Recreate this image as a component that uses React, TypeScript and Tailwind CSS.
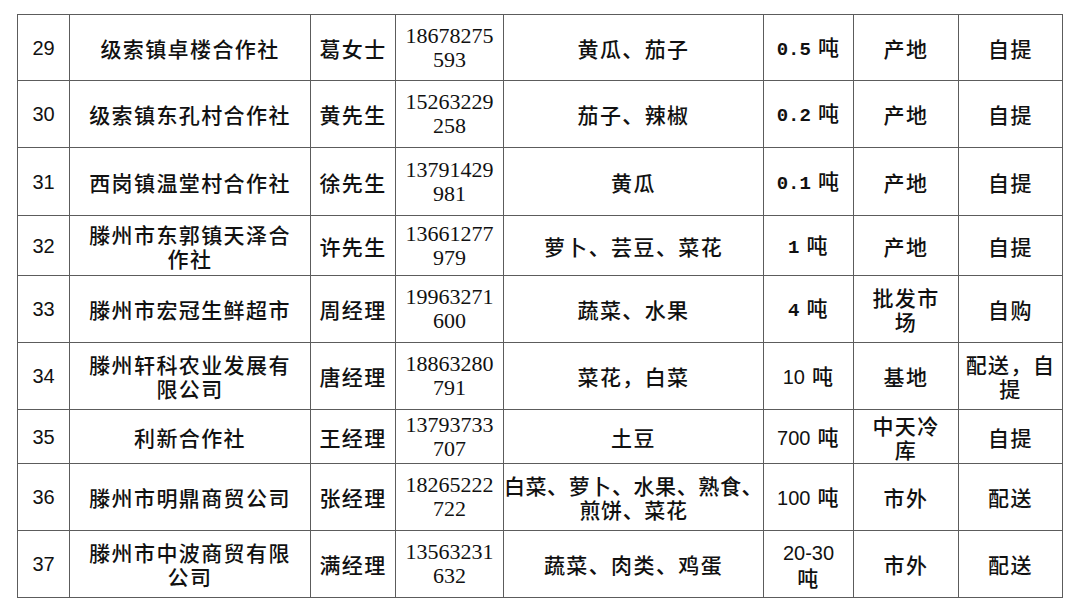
import React from "react";

type Row = {
  no: string;
  name: React.ReactNode;
  contact: string;
  phone: [string, string];
  goods: React.ReactNode;
  qty: React.ReactNode;
  place: React.ReactNode;
  mode: React.ReactNode;
  h: string;
};

const cjk = "font-['Noto_Sans_CJK_SC',sans-serif] text-[21px] tracking-[1.4px] font-medium leading-[24px]";
const mono = "font-['Liberation_Mono','Noto_Sans_CJK_SC',monospace]";
const sans = "font-['Liberation_Sans','Noto_Sans_CJK_SC',sans-serif]";

const Q = ({ n, kind }: { n: string; kind: "mono" | "sans" }) => (
  <span className="whitespace-nowrap">
    <span className={`${kind === "mono" ? mono + " text-[19px] font-bold" : sans + " text-[20px] font-medium"} tracking-normal`}>{n}</span>
    <span className="ml-[7px]">吨</span>
  </span>
);

const rows: Row[] = [
  { no: "29", name: "级索镇卓楼合作社", contact: "葛女士", phone: ["18678275", "593"], goods: "黄瓜、茄子", qty: <Q n="0.5" kind="mono" />, place: "产地", mode: "自提", h: "h-[65px]" },
  { no: "30", name: "级索镇东孔村合作社", contact: "黄先生", phone: ["15263229", "258"], goods: "茄子、辣椒", qty: <Q n="0.2" kind="mono" />, place: "产地", mode: "自提", h: "h-[66px]" },
  { no: "31", name: "西岗镇温堂村合作社", contact: "徐先生", phone: ["13791429", "981"], goods: "黄瓜", qty: <Q n="0.1" kind="mono" />, place: "产地", mode: "自提", h: "h-[67px]" },
  { no: "32", name: <>滕州市东郭镇天泽合<br />作社</>, contact: "许先生", phone: ["13661277", "979"], goods: "萝卜、芸豆、菜花", qty: <Q n="1" kind="mono" />, place: "产地", mode: "自提", h: "h-[59px]" },
  { no: "33", name: "滕州市宏冠生鲜超市", contact: "周经理", phone: ["19963271", "600"], goods: "蔬菜、水果", qty: <Q n="4" kind="mono" />, place: <>批发市<br />场</>, mode: "自购", h: "h-[66px]" },
  { no: "34", name: <>滕州轩科农业发展有<br />限公司</>, contact: "唐经理", phone: ["18863280", "791"], goods: "菜花，白菜", qty: <Q n="10" kind="sans" />, place: "基地", mode: <>配送，自<br />提</>, h: "h-[66px]" },
  { no: "35", name: "利新合作社", contact: "王经理", phone: ["13793733", "707"], goods: "土豆", qty: <Q n="700" kind="sans" />, place: <>中天冷<br />库</>, mode: "自提", h: "h-[53px]" },
  { no: "36", name: "滕州市明鼎商贸公司", contact: "张经理", phone: ["18265222", "722"], goods: <span className="whitespace-nowrap tracking-[0.6px]">白菜、萝卜、水果、熟食、<br />煎饼、菜花</span>, qty: <Q n="100" kind="sans" />, place: "市外", mode: "配送", h: "h-[66px]" },
  { no: "37", name: <>滕州市中波商贸有限<br />公司</>, contact: "满经理", phone: ["13563231", "632"], goods: "蔬菜、肉类、鸡蛋", qty: <span><span className={`${sans} text-[20px] font-medium tracking-normal`}>20-30</span><br />吨</span>, place: "市外", mode: "配送", h: "h-[66px]" },
];

const cell = "bg-white flex items-center justify-center text-center text-[#111]";

export default function App() {
  return (
    <div className="w-[1080px] h-[607px] bg-white overflow-hidden">
      <div className="ml-[17px] mt-[14px] w-[1046px] p-px bg-[#5c5c5c] grid gap-px grid-cols-[51px_240px_84px_107px_259px_89px_104px_103px]">
        {rows.map((r) => (
          <React.Fragment key={r.no}>
            <div className={`${cell} ${r.h} ${sans} text-[20px] font-medium`}>{r.no}</div>
            <div className={`${cell} ${r.h} ${cjk}`}>{r.name}</div>
            <div className={`${cell} ${r.h} ${cjk}`}>{r.contact}</div>
            <div className={`${cell} ${r.h} font-['Liberation_Serif',serif] text-[22px] leading-[24px]`}>
              <span>
                {r.phone[0]}
                <br />
                {r.phone[1]}
              </span>
            </div>
            <div className={`${cell} ${r.h} ${cjk}`}>{r.goods}</div>
            <div className={`${cell} ${r.h} ${cjk}`}>{r.qty}</div>
            <div className={`${cell} ${r.h} ${cjk}`}>{r.place}</div>
            <div className={`${cell} ${r.h} ${cjk}`}>{r.mode}</div>
          </React.Fragment>
        ))}
      </div>
    </div>
  );
}
